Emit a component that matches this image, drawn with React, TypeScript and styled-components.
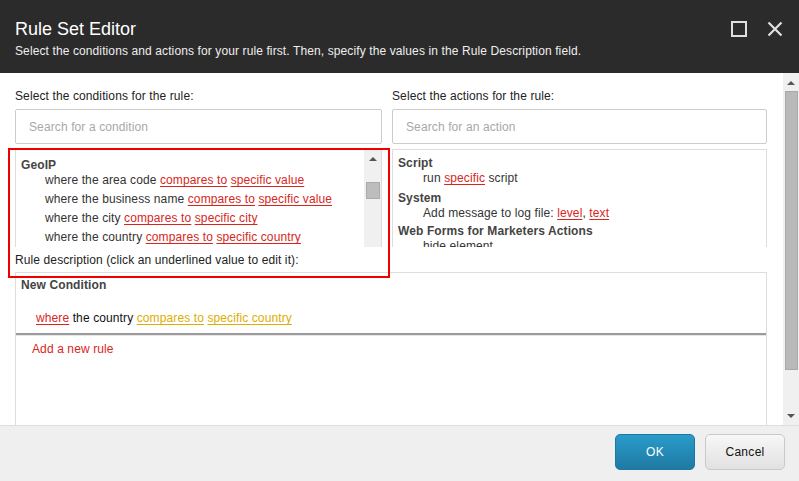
import React from "react";
import styled, { createGlobalStyle } from "styled-components";

const GlobalStyle = createGlobalStyle`
  html, body { margin: 0; padding: 0; overflow: hidden; background: #fff; }
  body { font-family: "Liberation Sans", Arial, sans-serif; font-size: 12px; color: #333; letter-spacing: 0.11px; }
  * { box-sizing: border-box; }
`;

const RED = "#d8261d";
const GOLD = "#dcae00";

const Dialog = styled.div`
  width: 799px;
  height: 481px;
  display: flex;
  flex-direction: column;
  background: #fff;
`;

const Header = styled.div`
  height: 73px;
  flex: none;
  background: #2b2b2b;
  display: flex;
  justify-content: space-between;
  padding: 18px 16px 0 15px;
`;

const TitleBlock = styled.div`
  display: flex;
  flex-direction: column;
`;

const Title = styled.div`
  color: #fff;
  font-size: 18px;
  line-height: 22px;
  letter-spacing: 0;
`;

const Subtitle = styled.div`
  color: #eee;
  font-size: 12px;
  line-height: 15px;
  margin-top: 4px;
`;

const HeaderIcons = styled.div`
  display: flex;
  gap: 20px;
  padding-top: 3px;
`;

const IconButton = styled.div`
  width: 16px;
  height: 16px;
  display: flex;
  color: #e0e0e0;
`;

const Body = styled.div`
  flex: 1;
  display: flex;
  position: relative;
  overflow: hidden;
`;

const Content = styled.div`
  flex: 1;
  padding: 16px 16px 0 15px;
  display: flex;
  flex-direction: column;
  min-width: 0;
`;

const Columns = styled.div`
  display: grid;
  grid-template-columns: 367px 1fr;
  column-gap: 10px;
`;

const Column = styled.div`
  display: flex;
  flex-direction: column;
  min-width: 0;
`;

const Label = styled.div`
  color: #222;
  font-size: 12px;
  line-height: 15px;
`;

const SearchInput = styled.div<{ $pad: number }>`
  height: 35px;
  margin-top: 5px;
  border: 1px solid #ccc;
  border-radius: 2px;
  display: flex;
  align-items: center;
  padding-left: ${(p) => p.$pad}px;
  color: #a8a8a8;
  font-size: 12px;
`;

const ListBox = styled.div`
  height: 98px;
  margin-top: 5px;
  border: 1px solid #ddd;
  border-bottom: none;
  display: flex;
  overflow: hidden;
`;

const ListInner = styled.div<{ $top: number }>`
  flex: 1;
  padding: ${(p) => p.$top}px 5px 0 5px;
  min-width: 0;
`;

const GroupTitle = styled.div<{ $gap?: number }>`
  font-weight: bold;
  color: #444;
  line-height: 15px;
  margin-top: ${(p) => p.$gap ?? 0}px;
`;

const Item = styled.div<{ $gapAfter: number; $indent: number }>`
  line-height: 15px;
  margin-bottom: ${(p) => p.$gapAfter}px;
  padding-left: ${(p) => p.$indent}px;
  color: #333;
  white-space: nowrap;
`;

const Link = styled.span<{ $color?: string }>`
  color: ${(p) => p.$color ?? RED};
  text-decoration: underline;
  text-underline-offset: 2px;
`;

const ListScroll = styled.div`
  width: 17px;
  flex: none;
  background: #f0f0f0;
  display: flex;
  flex-direction: column;
  align-items: center;
  padding-top: 7px;
`;

const Arrow = styled.div<{ $down?: boolean }>`
  width: 0;
  height: 0;
  border-left: 4px solid transparent;
  border-right: 4px solid transparent;
  ${(p) =>
    p.$down
      ? "border-top: 4px solid #555;"
      : "border-bottom: 4px solid #555;"}
`;

const SmallThumb = styled.div`
  width: 14px;
  height: 17px;
  margin-top: 21px;
  background: #bdbdbd;
  border: 1px solid #aaa;
`;

const DescLabel = styled(Label)`
  margin-top: 6px;
`;

const DescBox = styled.div`
  margin-top: 4px;
  flex: 1;
  border: 1px solid #ddd;
  border-bottom: none;
  display: flex;
  flex-direction: column;
`;

const RuleBlock = styled.div`
  padding: 5px 5px 0 5px;
  height: 62px;
  border-bottom: 2px solid #9b9b9b;
  box-shadow: 0 1px 0 #e6e6e6;
`;

const RuleTitle = styled.div`
  font-weight: bold;
  color: #444;
  line-height: 15px;
`;

const RuleLine = styled.div`
  margin-top: 18px;
  padding-left: 15px;
  color: #111;
  line-height: 15px;
`;

const AddRule = styled.div`
  color: ${RED};
  padding: 7px 0 0 16px;
  line-height: 15px;
`;

const PageScroll = styled.div`
  width: 16px;
  flex: none;
  background: #f0f0f0;
  display: flex;
  flex-direction: column;
  align-items: center;
  padding: 8px 0 7px;
`;

const BigThumb = styled.div`
  width: 13px;
  height: 279px;
  margin-top: 6px;
  background: #b9b9b9;
  border: 1px solid #a9a9a9;
`;

const Spacer = styled.div`
  flex: 1;
`;

const Highlight = styled.div`
  position: absolute;
  left: 8px;
  top: 75px;
  width: 382px;
  height: 130px;
  border: 2px solid #ee0000;
  pointer-events: none;
`;

const Footer = styled.div`
  height: 56px;
  flex: none;
  background: #efefef;
  border-top: 1px solid #ddd;
  display: flex;
  justify-content: flex-end;
  align-items: flex-start;
  gap: 10px;
  padding: 8px 14px 0 0;
`;

const Button = styled.button<{ $primary?: boolean }>`
  width: 80px;
  height: 36px;
  border-radius: 5px;
  font-family: "Liberation Sans", Arial, sans-serif;
  font-size: 12px;
  letter-spacing: 0.3px;
  cursor: pointer;
  ${(p) =>
    p.$primary
      ? `
    background: linear-gradient(#2a9bca, #1e7aa2);
    border: 1px solid #1d78a0;
    color: #fff;
  `
      : `
    background: linear-gradient(#f7f7f7, #e1e1e1);
    border: 1px solid #c9c9c9;
    color: #111;
  `}
`;

const conditions: [string, string, string][] = [
  ["where the area code ", "compares to", "specific value"],
  ["where the business name ", "compares to", "specific value"],
  ["where the city ", "compares to", "specific city"],
  ["where the country ", "compares to", "specific country"],
];

export default function App() {
  return (
    <>
      <GlobalStyle />
      <Dialog>
        <Header>
          <TitleBlock>
            <Title>Rule Set Editor</Title>
            <Subtitle>
              Select the conditions and actions for your rule first. Then, specify the values in the Rule
              Description field.
            </Subtitle>
          </TitleBlock>
          <HeaderIcons>
            <IconButton>
              <svg width="16" height="16" viewBox="0 0 16 16">
                <rect x="1" y="1" width="14" height="14" fill="none" stroke="currentColor" strokeWidth="2" />
              </svg>
            </IconButton>
            <IconButton>
              <svg width="16" height="16" viewBox="0 0 16 16">
                <path d="M1.5 1.5 L14.5 14.5 M14.5 1.5 L1.5 14.5" stroke="currentColor" strokeWidth="2.2" />
              </svg>
            </IconButton>
          </HeaderIcons>
        </Header>
        <Body>
          <Content>
            <Columns>
              <Column>
                <Label>Select the conditions for the rule:</Label>
                <SearchInput $pad={13}>Search for a condition</SearchInput>
                <ListBox>
                  <ListInner $top={8}>
                    <GroupTitle>GeoIP</GroupTitle>
                    {conditions.map(([t, a, b]) => (
                      <Item key={t} $gapAfter={4} $indent={24}>
                        {t}
                        <Link>{a}</Link> <Link>{b}</Link>
                      </Item>
                    ))}
                  </ListInner>
                  <ListScroll>
                    <Arrow />
                    <SmallThumb />
                  </ListScroll>
                </ListBox>
              </Column>
              <Column>
                <Label>Select the actions for the rule:</Label>
                <SearchInput $pad={13}>Search for an action</SearchInput>
                <ListBox>
                  <ListInner $top={6}>
                    <GroupTitle>Script</GroupTitle>
                    <Item $gapAfter={0} $indent={25}>
                      run <Link>specific</Link> script
                    </Item>
                    <GroupTitle $gap={5}>System</GroupTitle>
                    <Item $gapAfter={0} $indent={25}>
                      Add message to log file: <Link>level</Link>, <Link>text</Link>
                    </Item>
                    <GroupTitle $gap={3}>Web Forms for Marketers Actions</GroupTitle>
                    <Item $gapAfter={0} $indent={25}>
                      hide element
                    </Item>
                  </ListInner>
                </ListBox>
              </Column>
            </Columns>
            <DescLabel>Rule description (click an underlined value to edit it):</DescLabel>
            <DescBox>
              <RuleBlock>
                <RuleTitle>New Condition</RuleTitle>
                <RuleLine>
                  <Link>where</Link> the country <Link $color={GOLD}>compares to</Link>{" "}
                  <Link $color={GOLD}>specific country</Link>
                </RuleLine>
              </RuleBlock>
              <AddRule>Add a new rule</AddRule>
            </DescBox>
          </Content>
          <PageScroll>
            <Arrow />
            <BigThumb />
            <Spacer />
            <Arrow $down />
          </PageScroll>
          <Highlight />
        </Body>
        <Footer>
          <Button $primary>OK</Button>
          <Button>Cancel</Button>
        </Footer>
      </Dialog>
    </>
  );
}
